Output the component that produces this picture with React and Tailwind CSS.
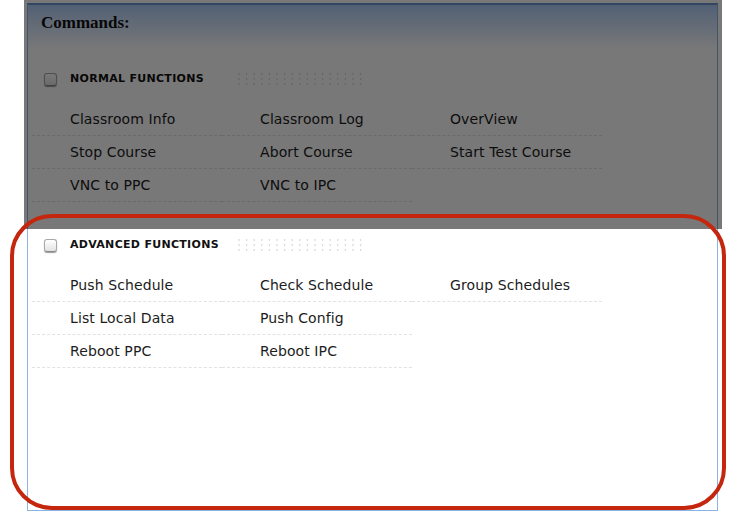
import React from 'react';

const normal = [
  ['Classroom Info', 'Classroom Log', 'OverView'],
  ['Stop Course', 'Abort Course', 'Start Test Course'],
  ['VNC to PPC', 'VNC to IPC'],
];

const advanced = [
  ['Push Schedule', 'Check Schedule', 'Group Schedules'],
  ['List Local Data', 'Push Config'],
  ['Reboot PPC', 'Reboot IPC'],
];

const Dots = () => (
  <svg width="128" height="14" viewBox="0 0 128 14" className="ml-[16px]">
    {[0, 1, 2].map((r) =>
      Array.from({ length: 17 }).map((_, c) => (
        <circle key={`${r}-${c}`} cx={1 + c * 7.6} cy={2 + r * 5} r="0.8" fill="#c8c8c8" />
      ))
    )}
  </svg>
);

const Section = ({ title, rows, className }) => (
  <div className={className}>
    <div className="flex items-center h-[24px] pl-[16px]">
      <span className="w-[13px] h-[13px] rounded-[3px] border border-[#a8a8a8] border-b-[#888] bg-gradient-to-b from-white to-[#e2e2e2] shadow-[0_1px_1px_rgba(0,0,0,0.4)]" />
      <span className="ml-[13px] w-[152px] text-[11px] font-bold text-[#111] tracking-[0.3px]" style={{ fontFamily: '"DejaVu Sans", Verdana, sans-serif' }}>
        {title}
      </span>
      <Dots />
    </div>
    <div className="mt-[12px] pl-[4px]">
      {rows.map((row, i) => (
        <div key={i} className="flex">
          {row.map((item) => (
            <div
              key={item}
              className="w-[190px] h-[33px] flex items-center pl-[38px] border-b border-dashed border-[#e2e2e2] text-[14px] text-[#1c1c1c] tracking-[0.1px]"
              style={{ fontFamily: '"DejaVu Sans", Verdana, sans-serif' }}
            >
              {item}
            </div>
          ))}
        </div>
      ))}
    </div>
  </div>
);

export default function App() {
  return (
    <div className="relative w-[735px] h-[519px] bg-white overflow-hidden">
      <div className="ml-[27px] pt-[3px]">
        <div className="w-[691px] h-[508px] border border-t-2 border-[#8db3e2] border-t-[#6a93cf]">
          <div className="h-[44px] bg-[linear-gradient(to_bottom,#b0cdf8,#ffffff)] pl-[13px] pt-[5px]">
            <span className="text-[17px] font-bold text-[#111]" style={{ fontFamily: '"Liberation Serif", "DejaVu Serif", serif' }}>
              Commands:
            </span>
          </div>
          <Section title="NORMAL FUNCTIONS" rows={normal} className="pt-[18px]" />
          <Section title="ADVANCED FUNCTIONS" rows={advanced} className="mt-[31px]" />
        </div>
      </div>

      {/* dimming overlay over the top part */}
      <div className="absolute left-[24px] top-0 w-[698px] h-[229px] bg-[rgba(0,0,0,0.53)]" />

      {/* red annotation frame */}
      <div className="absolute left-[10px] top-[214px] w-[716px] h-[296px] border-[4px] border-[#c4260e] rounded-[42px]" />
    </div>
  );
}
